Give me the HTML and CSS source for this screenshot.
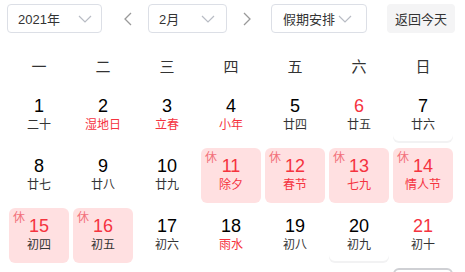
FILE: index.html
```html
<!DOCTYPE html>
<html lang="zh-CN">
<head>
    <meta charset="UTF-8">
    <meta name="viewport" content="width=device-width, initial-scale=1.0">
    <title>万年历</title>
    <link rel="stylesheet" href="styles.css">
</head>
<body>
    <div class="toolbar">
        <div class="select year">
            <span>2021年</span>
            <svg class="chevron" width="14" height="8" viewBox="0 0 14 8"><polyline points="1,1 7,7 13,1" fill="none" stroke="#b8bcc4" stroke-width="1.2"/></svg>
        </div>
        <span class="arrow prev">
            <svg width="8" height="14" viewBox="0 0 8 14"><polyline points="7,1 1,7 7,13" fill="none" stroke="#999" stroke-width="1.3"/></svg>
        </span>
        <div class="select month">
            <span>2月</span>
            <svg class="chevron" width="14" height="8" viewBox="0 0 14 8"><polyline points="1,1 7,7 13,1" fill="none" stroke="#b8bcc4" stroke-width="1.2"/></svg>
        </div>
        <span class="arrow next">
            <svg width="8" height="14" viewBox="0 0 8 14"><polyline points="1,1 7,7 1,13" fill="none" stroke="#999" stroke-width="1.3"/></svg>
        </span>
        <div class="select holiday">
            <span>假期安排</span>
            <svg class="chevron" width="14" height="8" viewBox="0 0 14 8"><polyline points="1,1 7,7 13,1" fill="none" stroke="#b8bcc4" stroke-width="1.2"/></svg>
        </div>
        <button class="today-btn">返回今天</button>
    </div>

    <div class="weekdays">
        <span>一</span><span>二</span><span>三</span><span>四</span><span>五</span><span>六</span><span>日</span>
    </div>

    <div class="days">
        <div class="day"><div class="num">1</div><div class="lunar">二十</div></div>
        <div class="day"><div class="num">2</div><div class="lunar fest">湿地日</div></div>
        <div class="day"><div class="num">3</div><div class="lunar fest">立春</div></div>
        <div class="day"><div class="num">4</div><div class="lunar fest">小年</div></div>
        <div class="day"><div class="num">5</div><div class="lunar">廿四</div></div>
        <div class="day"><div class="num red">6</div><div class="lunar">廿五</div></div>
        <div class="day work"><div class="num">7</div><div class="lunar">廿六</div></div>

        <div class="day"><div class="num">8</div><div class="lunar">廿七</div></div>
        <div class="day"><div class="num">9</div><div class="lunar">廿八</div></div>
        <div class="day"><div class="num">10</div><div class="lunar">廿九</div></div>
        <div class="day rest"><div class="num">11</div><div class="lunar fest">除夕</div></div>
        <div class="day rest"><div class="num">12</div><div class="lunar fest">春节</div></div>
        <div class="day rest"><div class="num">13</div><div class="lunar fest">七九</div></div>
        <div class="day rest"><div class="num">14</div><div class="lunar fest">情人节</div></div>

        <div class="day rest"><div class="num">15</div><div class="lunar">初四</div></div>
        <div class="day rest"><div class="num">16</div><div class="lunar">初五</div></div>
        <div class="day"><div class="num">17</div><div class="lunar">初六</div></div>
        <div class="day"><div class="num">18</div><div class="lunar fest">雨水</div></div>
        <div class="day"><div class="num">19</div><div class="lunar">初八</div></div>
        <div class="day work"><div class="num">20</div><div class="lunar">初九</div></div>
        <div class="day"><div class="num red">21</div><div class="lunar">初十</div></div>

        <div class="day"><div class="num">22</div><div class="lunar">十一</div></div>
        <div class="day"><div class="num">23</div><div class="lunar">十二</div></div>
        <div class="day"><div class="num">24</div><div class="lunar">十三</div></div>
        <div class="day"><div class="num">25</div><div class="lunar">十四</div></div>
        <div class="day"><div class="num">26</div><div class="lunar fest">元宵节</div></div>
        <div class="day"><div class="num red">27</div><div class="lunar">十六</div></div>
        <div class="day current"><div class="num red">28</div><div class="lunar">十七</div></div>
    </div>
</body>
</html>
```

FILE: styles.css
```css
body {
    margin: 0;
    background: #fff;
    color: #333;
    font-family: "Liberation Sans", "Noto Sans CJK SC", sans-serif;
    overflow: hidden;
}

.toolbar {
    display: flex;
    align-items: center;
    height: 29px;
    margin: 4px 0 0 7px;
}

.select {
    box-sizing: border-box;
    height: 29px;
    border: 1px solid #dcdfe6;
    border-radius: 4px;
    display: flex;
    align-items: center;
    justify-content: space-between;
    font-size: 13px;
    color: #333;
}

.year {
    width: 95px;
    padding: 0 9px 0 10px;
}

.month {
    width: 79px;
    padding: 0 11px 0 10px;
}

.holiday {
    width: 96px;
    padding: 0 14px 0 11px;
}

.arrow {
    display: flex;
    align-items: center;
}

.prev {
    margin: 0 16px 0 22px;
}

.next {
    margin: 0 20px 0 16px;
}

.today-btn {
    margin-left: 20px;
    width: 68px;
    height: 29px;
    border: none;
    border-radius: 4px;
    background: #f4f4f5;
    color: #333;
    font-family: inherit;
    font-size: 13px;
    padding: 0;
}

.weekdays {
    display: grid;
    grid-template-columns: repeat(7, 60px);
    column-gap: 4px;
    margin: 17px 0 0 9px;
    height: 34px;
    line-height: 34px;
    text-align: center;
    font-size: 15px;
    color: #333;
}

.days {
    display: grid;
    grid-template-columns: repeat(7, 60px);
    grid-auto-rows: 55px;
    gap: 5px 4px;
    margin: 4px 0 0 9px;
}

.day {
    position: relative;
    box-sizing: border-box;
    border-radius: 6px;
    padding-top: 8px;
    text-align: center;
}

.num {
    font-size: 18px;
    line-height: 21px;
    color: #000;
}

.lunar {
    font-size: 12px;
    line-height: 16px;
    color: #333;
}

.num.red,
.lunar.fest {
    color: #f5333f;
}

.rest {
    background: #ffe0e1;
}

.rest .num {
    color: #f5333f;
}

.rest::before {
    content: "休";
    position: absolute;
    top: 3px;
    left: 4px;
    font-size: 12px;
    line-height: 14px;
    color: #f2707a;
}

.work {
    box-shadow: inset 0 -2px 0 #f2f2f3;
}

.current {
    border: 2px solid #cfd0d4;
    padding-top: 6px;
}
```
